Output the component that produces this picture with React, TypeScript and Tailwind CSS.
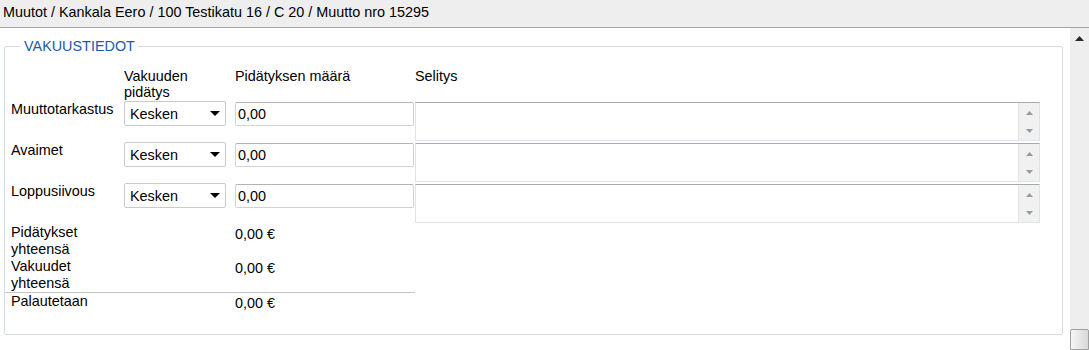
import React from "react";

function SelectBox() {
  return (
    <div className="h-[25px] w-[102px] border border-[#cacaca] rounded-[2px] bg-white flex items-center justify-between pl-[5px] pr-[5px]">
      <span className="leading-[16px]">Kesken</span>
      <svg width="10" height="5" viewBox="0 0 10 5" className="block">
        <polygon points="0,0 10,0 5,5" fill="#000" />
      </svg>
    </div>
  );
}

function NumInput() {
  return (
    <div className="mt-[1px] h-[24px] w-[179px] border border-[#d2d2d2] border-t-[#b4b4b4] rounded-[2px] bg-white flex items-center pl-[2px]">
      <span className="leading-[16px]">0,00</span>
    </div>
  );
}

function TextArea() {
  return (
    <div className="mt-[1px] h-[39px] w-[625px] border border-[#dce3ea] border-t-[#a9a9a9] bg-white flex">
      <div className="flex-1" />
      <div className="w-[21px] bg-[#f1f1f1] border-l border-[#e4e4e4] flex flex-col items-center justify-between pt-[8px] pb-[7px]">
        <svg width="7" height="4" viewBox="0 0 7 4" className="block">
          <polygon points="3.5,0 7,4 0,4" fill="#9a9a9a" />
        </svg>
        <svg width="7" height="4" viewBox="0 0 7 4" className="block">
          <polygon points="0,0 7,0 3.5,4" fill="#9a9a9a" />
        </svg>
      </div>
    </div>
  );
}

const rows = ["Muuttotarkastus", "Avaimet", "Loppusiivous"];

export default function App() {
  return (
    <div className="w-[1089px] h-[350px] overflow-hidden bg-white flex flex-col font-['Liberation_Sans',Arial,sans-serif] text-[14.4px] text-black">
      <div className="h-[28px] shrink-0 bg-[#eeeeee] border-b border-[#a3a3a3] pl-[3px] leading-[25px]">
        Muutot / Kankala Eero / 100 Testikatu 16 / C 20 / Muutto nro 15295
      </div>
      <div className="flex flex-1 min-h-0">
        <div className="flex-1 pl-[4px] pr-[7px] pt-[10px]">
          <fieldset className="border border-[#d3dde6] rounded-[2px] pt-[14px] pb-[22px]">
            <legend className="ml-[16px] px-[3px] leading-[16px] text-[#2159a9]">VAKUUSTIEDOT</legend>
            <div className="grid grid-cols-[119px_111px_180px_625px]">
              <div className="h-[33px]" />
              <div className="h-[33px] leading-[16px]">
                Vakuuden
                <br />
                pidätys
              </div>
              <div className="h-[33px] leading-[16px]">Pidätyksen määrä</div>
              <div className="h-[33px] leading-[16px]">Selitys</div>
              {rows.map((r) => (
                <React.Fragment key={r}>
                  <div className="h-[41px] pl-[6px] leading-[17px]">{r}</div>
                  <div className="h-[41px]">
                    <SelectBox />
                  </div>
                  <div className="h-[41px]">
                    <NumInput />
                  </div>
                  <div className="h-[41px]">
                    <TextArea />
                  </div>
                </React.Fragment>
              ))}
            </div>
            <div className="w-[410px] leading-[17px]">
              <div className="grid grid-cols-[230px_180px] h-[34px]">
                <div className="pl-[6px]">
                  Pidätykset
                  <br />
                  yhteensä
                </div>
                <div className="pt-[2px]">0,00 €</div>
              </div>
              <div className="grid grid-cols-[230px_180px] h-[34px]">
                <div className="pl-[6px]">
                  Vakuudet
                  <br />
                  yhteensä
                </div>
                <div className="pt-[2px]">0,00 €</div>
              </div>
              <div className="grid grid-cols-[230px_180px] border-t border-[#c4c8cc]">
                <div className="pl-[6px]">Palautetaan</div>
                <div className="pt-[2px]">0,00 €</div>
              </div>
            </div>
          </fieldset>
        </div>
        <div className="w-[19px] shrink-0 bg-[#eeeeee] flex flex-col items-center justify-between">
          <svg width="9" height="5" viewBox="0 0 9 5" className="block mt-[8px]">
            <polygon points="4.5,0 9,5 0,5" fill="#2a2a2a" />
          </svg>
          <div className="w-[19px] h-[21px] border border-[#a0a0a0] rounded-t-[2px] bg-gradient-to-r from-[#f6f6f6] to-[#d8d8d8]" />
        </div>
      </div>
    </div>
  );
}
